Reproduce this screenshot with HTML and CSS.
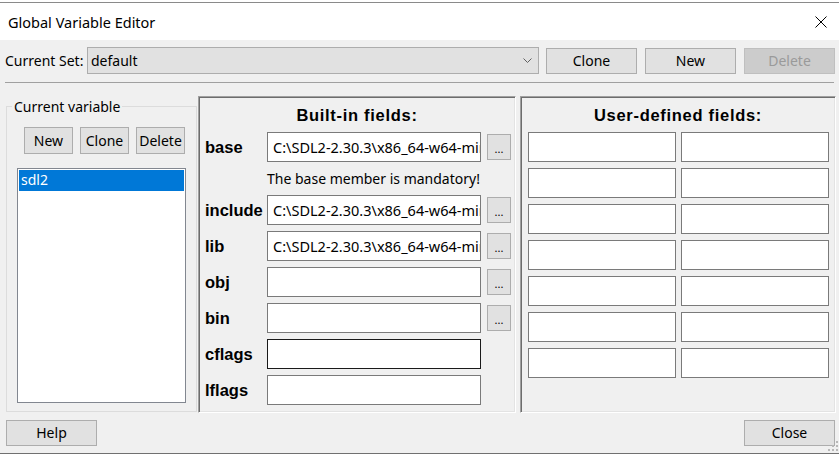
FILE: index.html
```html
<!DOCTYPE html>
<html>
<head>
<meta charset="utf-8">
<link rel="stylesheet" href="styles.css">
</head>
<body>
<div class="window">
  <div class="titlebar">
    <span class="title">Global Variable Editor</span>
    <svg class="close-x" width="12" height="12" viewBox="0 0 12 12"><path d="M0.5 0.5 L11.5 11.5 M11.5 0.5 L0.5 11.5" stroke="#000" stroke-width="1" fill="none"/></svg>
  </div>
  <div class="client">
    <div class="setrow">
      <span class="setlabel">Current Set:</span>
      <div class="combo">
        <span class="combo-text">default</span>
        <svg class="chev" width="9" height="5" viewBox="0 0 9 5"><path d="M0.5 0.5 L4.5 4.5 L8.5 0.5" stroke="#606060" stroke-width="1" fill="none"/></svg>
      </div>
      <button class="btn set-btn first">Clone</button>
      <button class="btn set-btn">New</button>
      <button class="btn set-btn" disabled>Delete</button>
    </div>
    <div class="sep"></div>
    <div class="main">
      <fieldset class="group">
        <legend>Current variable</legend>
        <div class="var-btns">
          <button class="btn var-btn">New</button>
          <button class="btn var-btn">Clone</button>
          <button class="btn var-btn">Delete</button>
        </div>
        <div class="listbox">
          <div class="item sel">sdl2</div>
        </div>
      </fieldset>
      <section class="panel builtin">
        <h2 class="panel-title">Built-in fields:</h2>
        <div class="fields">
          <span class="flabel">base</span>
          <input class="field" type="text" value="C:\SDL2-2.30.3\x86_64-w64-mingw32">
          <button class="btn dots">...</button>

          <span class="note">The base member is mandatory!</span>

          <span class="flabel">include</span>
          <input class="field" type="text" value="C:\SDL2-2.30.3\x86_64-w64-mingw32\include">
          <button class="btn dots">...</button>

          <span class="flabel">lib</span>
          <input class="field" type="text" value="C:\SDL2-2.30.3\x86_64-w64-mingw32\lib">
          <button class="btn dots">...</button>

          <span class="flabel">obj</span>
          <input class="field" type="text" value="">
          <button class="btn dots">...</button>

          <span class="flabel">bin</span>
          <input class="field" type="text" value="">
          <button class="btn dots">...</button>

          <span class="flabel">cflags</span>
          <input class="field focus" type="text" value="">
          <span></span>

          <span class="flabel">lflags</span>
          <input class="field" type="text" value="">
          <span></span>
        </div>
      </section>
      <section class="panel user">
        <h2 class="panel-title">User-defined fields:</h2>
        <div class="ugrid">
          <input class="field" type="text"><input class="field" type="text">
          <input class="field" type="text"><input class="field" type="text">
          <input class="field" type="text"><input class="field" type="text">
          <input class="field" type="text"><input class="field" type="text">
          <input class="field" type="text"><input class="field" type="text">
          <input class="field" type="text"><input class="field" type="text">
          <input class="field" type="text"><input class="field" type="text">
        </div>
      </section>
    </div>
    <div class="bottom">
      <button class="btn bottom-btn">Help</button>
      <button class="btn bottom-btn">Close</button>
    </div>
    <svg class="grip" width="12" height="12" viewBox="0 0 12 12">
      <rect x="9" y="1" width="2" height="2" fill="#b8b8b8"/>
      <rect x="5" y="5" width="2" height="2" fill="#b8b8b8"/>
      <rect x="9" y="5" width="2" height="2" fill="#b8b8b8"/>
      <rect x="1" y="9" width="2" height="2" fill="#b8b8b8"/>
      <rect x="5" y="9" width="2" height="2" fill="#b8b8b8"/>
      <rect x="9" y="9" width="2" height="2" fill="#b8b8b8"/>
    </svg>
  </div>
</div>
</body>
</html>
```

FILE: styles.css
```css
* { box-sizing: border-box; }

html, body {
  margin: 0;
  padding: 0;
}

body {
  width: 839px;
  height: 456px;
  overflow: hidden;
  background: #ffffff;
  font-family: "Noto Sans", "Open Sans", sans-serif;
  font-size: 14px;
  color: #000;
}

.window {
  margin-top: 2px;
  border-top: 1px solid #8a8a8a;
  width: 839px;
  position: relative;
}

.titlebar {
  height: 37px;
  background: #ffffff;
  display: flex;
  align-items: center;
  justify-content: space-between;
  padding-left: 8px;
  padding-right: 12px;
}

.title {
  font-size: 14.5px;
  line-height: 20px;
}

.close-x {
  display: block;
  margin-top: 1px;
}

.client {
  position: relative;
  height: 414px;
  background: #f0f0f0;
  border-bottom: 1px solid #707070;
  padding-top: 7px;
}

.setrow {
  display: flex;
  align-items: flex-start;
  height: 27px;
}

.setlabel {
  flex: 0 0 87px;
  padding-left: 5px;
  line-height: 27px;
  white-space: nowrap;
}

.combo {
  flex: 0 0 452px;
  height: 27px;
  background: #e1e1e1;
  border: 1px solid #adadad;
  display: flex;
  align-items: center;
  justify-content: space-between;
  padding-left: 3px;
  padding-right: 6px;
}

.combo-text { line-height: 20px; }

.chev { display: block; }

.btn {
  font-family: "Noto Sans", "Open Sans", sans-serif;
  font-size: 14px;
  color: #000;
  background: #e1e1e1;
  border: 1px solid #adadad;
  padding: 0;
  margin: 0;
  line-height: 20px;
  text-align: center;
}

.set-btn {
  flex: 0 0 91px;
  height: 26px;
  margin-top: 1px;
  margin-left: 8px;
}

.set-btn.first { margin-left: 7px; }

.set-btn:disabled {
  background: #cccccc;
  border-color: #bfbfbf;
  color: #9a9a9a;
}

.sep {
  margin: 8px 5px 0 5px;
  height: 1px;
  background: #a0a0a0;
}

.main {
  display: flex;
  align-items: flex-start;
  margin-top: 13px;
  height: 317px;
}

.group {
  margin: 0 0 0 6px;
  width: 191px;
  height: 316px;
  border: 1px solid #dcdcdc;
  padding: 10px 0 0 0;
  min-width: 0;
}

.group legend {
  margin-left: 5px;
  padding: 0 2px;
  line-height: 21px;
  font-size: 14px;
}

.var-btns {
  display: flex;
  gap: 7px;
  padding-left: 17px;
}

.var-btn {
  width: 49px;
  height: 27px;
}

.listbox {
  margin: 14px 0 0 10px;
  width: 169px;
  height: 235px;
  background: #ffffff;
  border: 1px solid #828790;
  padding: 1px;
}

.item {
  height: 21px;
  line-height: 20px;
  padding-left: 2px;
}

.item.sel {
  background: #0078d7;
  color: #ffffff;
}

.panel {
  height: 317px;
  border-style: solid;
  border-width: 1px;
  border-color: #a0a0a0 #ffffff #ffffff #a0a0a0;
  box-shadow: inset 1px 1px 0 #6d6d6d, inset -1px -1px 0 #e3e3e3;
  padding-top: 8px;
}

.builtin {
  margin-left: 1px;
  width: 318px;
  padding-left: 6px;
}

.user {
  margin-left: 4px;
  width: 316px;
  padding-left: 7px;
}

.panel-title {
  margin: 0 0 6px 0;
  height: 21px;
  line-height: 21px;
  text-align: center;
  font-family: "Liberation Sans", Arial, sans-serif;
  font-weight: bold;
  font-size: 16.5px;
  letter-spacing: 0.7px;
}

.builtin .panel-title { padding-right: 6px; }
.user .panel-title { padding-right: 7px; }

.fields {
  display: grid;
  grid-template-columns: 62px 214px 30px;
  grid-template-rows: 30px 21px 30px 30px 30px 30px 30px 30px;
  column-gap: 0;
  row-gap: 6px;
  align-items: center;
}

.flabel {
  font-family: "Liberation Sans", Arial, sans-serif;
  font-weight: bold;
  font-size: 16.5px;
  line-height: 20px;
}

.note {
  grid-column: 2 / 4;
  line-height: 21px;
  white-space: nowrap;
  font-size: 14px;
}

.field {
  display: block;
  width: 100%;
  height: 30px;
  margin: 0;
  background: #ffffff;
  border: 1px solid #7a7a7a;
  padding: 0 0 0 5px;
  font-family: "Noto Sans", "Open Sans", sans-serif;
  font-size: 14.5px;
  color: #000;
  outline: none;
}

.field.focus { border-color: #1a1a1a; }

.dots {
  justify-self: end;
  width: 24px;
  height: 26px;
  font-size: 11px;
  padding-top: 4px;
  line-height: 18px;
}

.ugrid {
  display: grid;
  grid-template-columns: 148px 148px;
  grid-auto-rows: 30px;
  column-gap: 5px;
  row-gap: 6px;
}

.bottom {
  display: flex;
  justify-content: space-between;
  padding: 0 4px 0 6px;
  margin-top: 7px;
}

.bottom-btn {
  width: 91px;
  height: 26px;
}

.grip {
  position: absolute;
  right: 0;
  bottom: 1px;
  display: block;
}
```
